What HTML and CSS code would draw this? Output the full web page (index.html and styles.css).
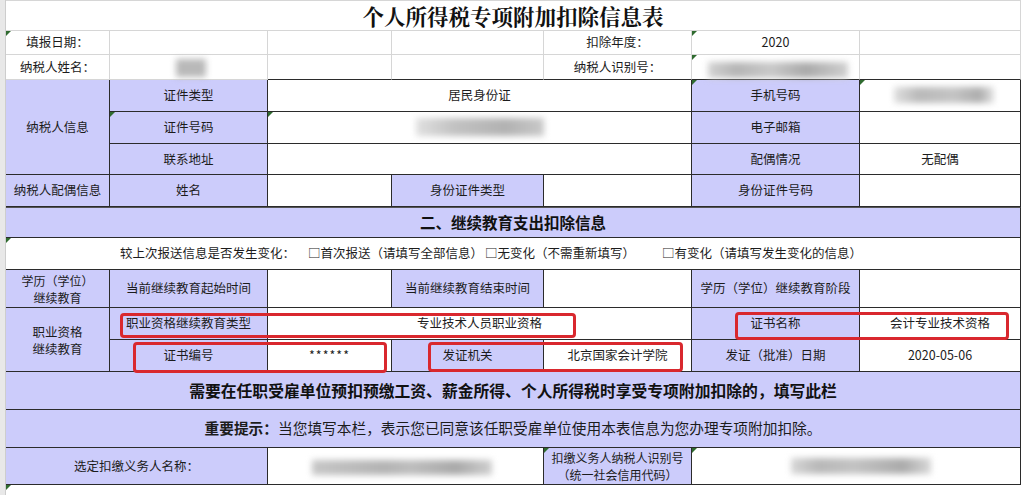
FILE: index.html
```html
<!DOCTYPE html>
<html lang="zh-CN">
<head>
<meta charset="utf-8">
<title>个人所得税专项附加扣除信息表</title>
<link rel="stylesheet" href="styles.css">
</head>
<body>
<div class="sheet">
  <div class="rowhdr"></div>
  <div class="table">
    <div class="c l s7 title">个人所得税专项附加扣除信息表</div>

    <div class="c l">填报日期：</div><div class="c l"></div><div class="c l"></div><div class="c l"></div><div class="c l">扣除年度：</div><div class="c l">2020</div><div class="c l"></div>

    <div class="c l">纳税人姓名：</div><div class="c l"></div><div class="c l db"></div><div class="c l db"></div><div class="c l db">纳税人识别号：</div><div class="c l db"></div><div class="c l db"></div>

    <div class="c v r3">纳税人信息</div><div class="c v">证件类型</div><div class="c s3">居民身份证</div><div class="c v">手机号码</div><div class="c"></div>
    <div class="c v">证件号码</div><div class="c s3"></div><div class="c v">电子邮箱</div><div class="c"></div>
    <div class="c v">联系地址</div><div class="c s3"></div><div class="c v">配偶情况</div><div class="c">无配偶</div>

    <div class="c v">纳税人配偶信息</div><div class="c v">姓名</div><div class="c"></div><div class="c v">身份证件类型</div><div class="c"></div><div class="c v">身份证件号码</div><div class="c"></div>

    <div class="c v s7 b sec">二、继续教育支出扣除信息</div>

    <div class="c s7 change">
      <span class="q1">较上次报送信息是否发生变化：</span>
      <span class="q2">□首次报送（请填写全部信息）</span>
      <span class="q3">□无变化（不需重新填写）</span>
      <span class="q4">□有变化（请填写发生变化的信息）</span>
    </div>

    <div class="c v two">学历（学位）<br>继续教育</div><div class="c v">当前继续教育起始时间</div><div class="c"></div><div class="c v">当前继续教育结束时间</div><div class="c"></div><div class="c v">学历（学位）继续教育阶段</div><div class="c"></div>

    <div class="c v r2 two2">职业资格<br>继续教育</div><div class="c v">职业资格继续教育类型</div><div class="c s3">专业技术人员职业资格</div><div class="c v">证书名称</div><div class="c">会计专业技术资格</div>
    <div class="c v">证书编号</div><div class="c stars">******</div><div class="c v">发证机关</div><div class="c">北京国家会计学院</div><div class="c v">发证（批准）日期</div><div class="c">2020-05-06</div>

    <div class="c v s7 b banner">需要在任职受雇单位预扣预缴工资、薪金所得、个人所得税时享受专项附加扣除的，填写此栏</div>
    <div class="c v s7 notice"><strong>重要提示：</strong>当您填写本栏，表示您已同意该任职受雇单位使用本表信息为您办理专项附加扣除。</div>

    <div class="c v s2">选定扣缴义务人名称：</div><div class="c s2"></div><div class="c v two3">扣缴义务人纳税人识别号<br>（统一社会信用代码）</div><div class="c s2"></div>

    <div class="blur bl1"></div>
    <div class="blur bl2"></div>
    <div class="blur bl3"></div>
    <div class="blur bl4"></div>
    <div class="blur bl5"></div>
    <div class="blur bl6"></div>

    <div class="cm cm1"></div><div class="cm cm2"></div><div class="cm cm3"></div><div class="cm cm4"></div>
    <div class="cm cm5"></div><div class="cm cm6"></div><div class="cm cm7"></div><div class="cm cm8"></div>
    <div class="cm cm9"></div><div class="cm cm10"></div><div class="cm cm11"></div>

    <div class="mark m1"></div>
    <div class="mark m2"></div>
    <div class="mark m3"></div>
    <div class="mark m4"></div>
  </div>
</div>
</body>
</html>
```

FILE: styles.css
```css
* { box-sizing: border-box; margin: 0; padding: 0; }
html, body { background: #fff; }
body {
  width: 1024px;
  height: 495px;
  overflow: hidden;
  font-family: "Noto Sans CJK SC", "Liberation Sans", sans-serif;
  font-size: 12.5px;
  color: #1c1c1c;
}
.sheet { display: flex; height: 495px; }
.rowhdr {
  width: 6px;
  flex: none;
  background: #e8e8e8;
  border-right: 1px solid #cdcdcd;
}
.table {
  position: relative;
  display: grid;
  grid-template-columns: 104px 158px 124px 152px 148px 168px 161px;
  grid-template-rows: 31px 24px 25px 32px 32px 31px 32px 31px 32px 38px 32px 32px 38px 38px 37px;
  align-content: start;
  width: 1015px;
  flex: none;
}
.c {
  display: flex;
  align-items: center;
  justify-content: center;
  text-align: center;
  line-height: 1.15;
  white-space: nowrap;
  border-right: 1px solid #2b2b2b;
  border-bottom: 1px solid #2b2b2b;
  background: #fff;
}
.l { border-color: #d6d6d6; }
.db { border-bottom-color: #2b2b2b; }
.v { background: #ccccfb; }
.s2 { grid-column: span 2; }
.s3 { grid-column: span 3; }
.s7 { grid-column: span 7; }
.r2 { grid-row: span 2; }
.r3 { grid-row: span 3; }
.b { font-weight: 700; color: #111; }

.title {
  font-family: "Noto Serif CJK SC", "Noto Sans CJK SC", serif;
  font-weight: 700;
  font-size: 21.5px;
  color: #111;
  border-top: 1px solid #d6d6d6;
  padding-top: 2px;
}
.sec { font-size: 15.5px; border-top: 1px solid #555; }
.change { justify-content: flex-start; padding-left: 114px; }
.q2 { margin-left: 13px; }
.q3 { margin-left: 2px; }
.q4 { margin-left: 27px; }
.two { font-size: 12px; line-height: 17px; }
.two2 { line-height: 17px; }
.two3 { font-size: 12px; line-height: 17px; }
.stars { letter-spacing: 1px; }
.banner { font-size: 15.8px; padding-top: 2px; }
.notice { font-size: 14.7px; }
.notice strong { font-weight: 700; }

/* blurred (masked) personal data */
.blur { position: absolute; filter: blur(3px); }
.bl1 { left: 170px; top: 59px; width: 30px; height: 18px; background: #b9b9b9; }
.bl2 { left: 702px; top: 62px; width: 140px; height: 16px; background: linear-gradient(90deg, #d2d2d2, #b5b5b5 20%, #c9c9c9 45%, #aaaaaa 70%, #cfcfcf); }
.bl3 { left: 888px; top: 87px; width: 100px; height: 16px; background: linear-gradient(90deg, #dedede, #b9b9b9 25%, #c4c4c4 60%, #adadad 85%, #e2e2e2); }
.bl4 { left: 410px; top: 118px; width: 128px; height: 18px; background: linear-gradient(90deg, #e0e0e0, #c2c2c2 30%, #b2b2b2 70%, #c9c9c9); }
.bl5 { left: 306px; top: 460px; width: 180px; height: 15px; background: linear-gradient(90deg, #c6c6c6, #b3b3b3 40%, #bdbdbd 55%, #a9a9a9 80%, #cfcfcf); }
.bl6 { left: 785px; top: 458px; width: 140px; height: 16px; background: linear-gradient(90deg, #d6d6d6, #b8b8b8 20%, #c3c3c3 45%, #ababab 80%, #d8d8d8); }

/* comment indicators */
.cm {
  position: absolute;
  width: 0;
  height: 0;
  border-top: 5px solid #2f6b2f;
  border-right: 5px solid transparent;
}
.cm1 { left: 0; top: 31px; }
.cm2 { left: 686px; top: 31px; }
.cm3 { left: 686px; top: 55px; }
.cm4 { left: 686px; top: 80px; }
.cm5 { left: 854px; top: 80px; }
.cm6 { left: 104px; top: 112px; }
.cm7 { left: 262px; top: 112px; }
.cm8 { left: 0; top: 238px; }
.cm9 { left: 538px; top: 448px; }
.cm10 { left: 686px; top: 448px; }
.cm11 { left: 0; top: 485px; }

/* red highlight boxes */
.mark {
  position: absolute;
  border: 3px solid #d9282e;
  border-radius: 4px;
}
.m1 { left: 114px; top: 313px; width: 456px; height: 25px; }
.m2 { left: 729px; top: 312px; width: 274px; height: 28px; }
.m3 { left: 127px; top: 342px; width: 254px; height: 31px; }
.m4 { left: 422px; top: 342px; width: 255px; height: 30px; }
```
